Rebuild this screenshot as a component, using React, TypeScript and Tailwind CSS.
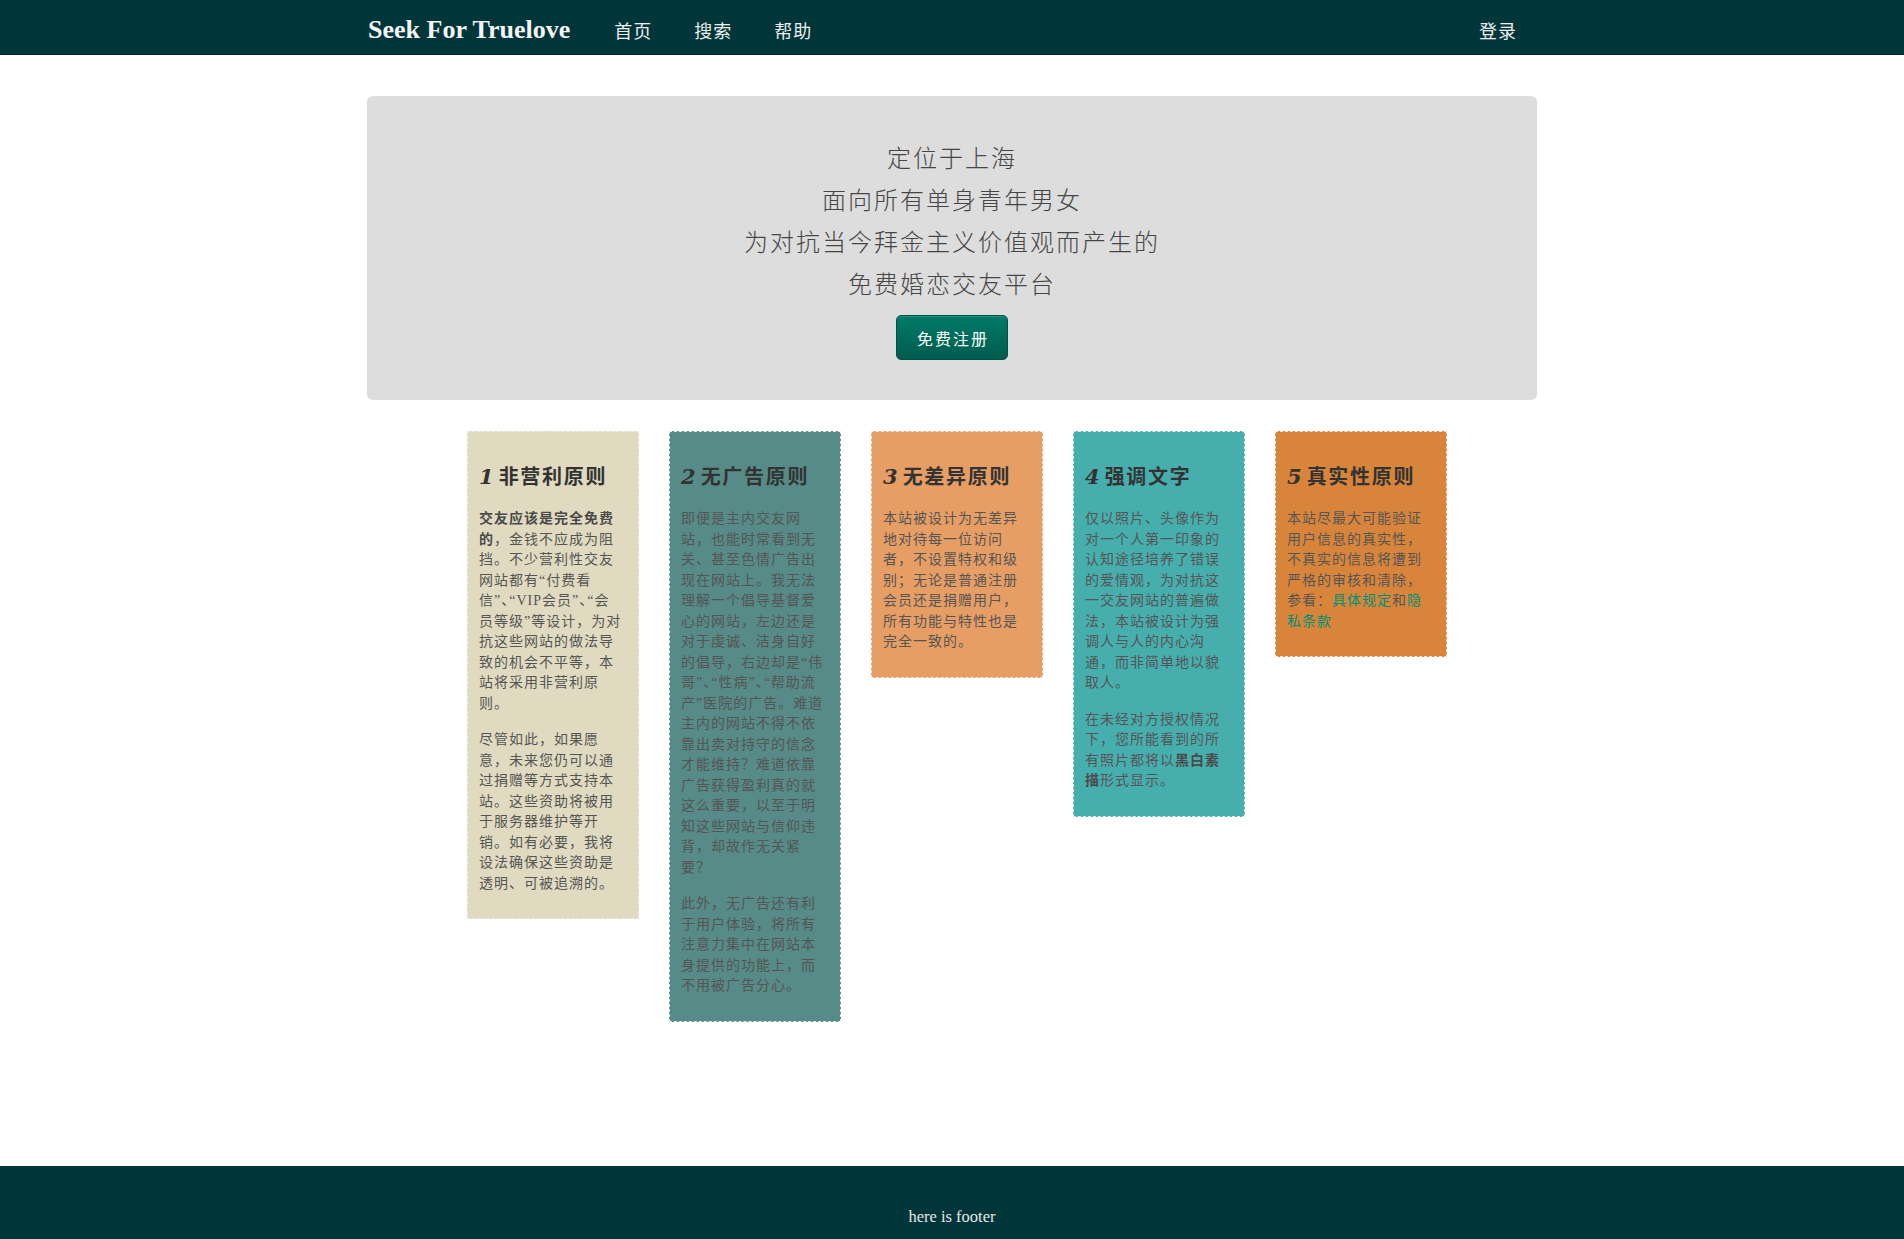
import React from "react";

type Line = React.ReactNode;

const B = ({ children }: { children: React.ReactNode }) => (
  <b className="font-bold text-[#4a4a4a]">{children}</b>
);
const H = ({ children }: { children: React.ReactNode }) => (
  <span className="[font-feature-settings:'halt']">{children}</span>
);
const L = ({ children }: { children: React.ReactNode }) => (
  <a href="#" className="text-[#008f78] no-underline">
    {children}
  </a>
);

type Card = { bg: string; num: string; title: string; paras: Line[][] };

const cards: Card[] = [
  {
    bg: "bg-[#e0dbc0]",
    num: "1",
    title: "非营利原则",
    paras: [
      [
        <B>交友应该是完全免费</B>,
        <>
          <B>的</B>，金钱不应成为阻
        </>,
        "挡。不少营利性交友",
        "网站都有“付费看",
        <>
          信”<H>、</H>“VIP会员”<H>、</H>“会
        </>,
        "员等级”等设计，为对",
        "抗这些网站的做法导",
        "致的机会不平等，本",
        "站将采用非营利原",
        "则。",
      ],
      [
        "尽管如此，如果愿",
        "意，未来您仍可以通",
        "过捐赠等方式支持本",
        "站。这些资助将被用",
        "于服务器维护等开",
        "销。如有必要，我将",
        "设法确保这些资助是",
        "透明、可被追溯的。",
      ],
    ],
  },
  {
    bg: "bg-[#568b87]",
    num: "2",
    title: "无广告原则",
    paras: [
      [
        "即便是主内交友网",
        "站，也能时常看到无",
        "关、甚至色情广告出",
        "现在网站上。我无法",
        "理解一个倡导基督爱",
        "心的网站，左边还是",
        "对于虔诚、洁身自好",
        "的倡导，右边却是“伟",
        <>
          哥”<H>、</H>“性病”<H>、</H>“帮助流
        </>,
        "产”医院的广告。难道",
        "主内的网站不得不依",
        "靠出卖对持守的信念",
        "才能维持？难道依靠",
        "广告获得盈利真的就",
        "这么重要，以至于明",
        "知这些网站与信仰违",
        "背，却故作无关紧",
        "要？",
      ],
      [
        "此外，无广告还有利",
        "于用户体验，将所有",
        "注意力集中在网站本",
        "身提供的功能上，而",
        "不用被广告分心。",
      ],
    ],
  },
  {
    bg: "bg-[#e79e64]",
    num: "3",
    title: "无差异原则",
    paras: [
      [
        "本站被设计为无差异",
        "地对待每一位访问",
        "者，不设置特权和级",
        "别；无论是普通注册",
        "会员还是捐赠用户，",
        "所有功能与特性也是",
        "完全一致的。",
      ],
    ],
  },
  {
    bg: "bg-[#47aeae]",
    num: "4",
    title: "强调文字",
    paras: [
      [
        "仅以照片、头像作为",
        "对一个人第一印象的",
        "认知途径培养了错误",
        "的爱情观，为对抗这",
        "一交友网站的普遍做",
        "法，本站被设计为强",
        "调人与人的内心沟",
        "通，而非简单地以貌",
        "取人。",
      ],
      [
        "在未经对方授权情况",
        "下，您所能看到的所",
        <>
          有照片都将以<B>黑白素</B>
        </>,
        <>
          <B>描</B>形式显示。
        </>,
      ],
    ],
  },
  {
    bg: "bg-[#d8853b]",
    num: "5",
    title: "真实性原则",
    paras: [
      [
        "本站尽最大可能验证",
        "用户信息的真实性，",
        "不真实的信息将遭到",
        "严格的审核和清除，",
        <>
          参看：<L>具体规定</L>和<L>隐</L>
        </>,
        <L>私条款</L>,
      ],
    ],
  },
];

export default function App() {
  return (
    <div className="min-h-screen flex flex-col bg-white font-['Liberation_Serif','Noto_Sans_CJK_SC',serif]">
      {/* Navbar */}
      <nav className="h-[55px] bg-[#00353a] border-b border-[#00272b] box-border">
        <div className="w-[1170px] mx-auto h-full flex items-center">
          <a
            href="#"
            className="ml-[1px] text-[26px] font-bold text-[#f4f4f4] leading-none font-['Liberation_Serif',serif] pt-[5px]"
          >
            Seek For Truelove
          </a>
          <div className="ml-[44px] flex gap-[42px] text-[18px] tracking-[1px] text-[#eeeeee] font-['Noto_Sans_CJK_SC',sans-serif] pt-[6px]">
            <a href="#">首页</a>
            <a href="#">搜索</a>
            <a href="#">帮助</a>
          </div>
          <a
            href="#"
            className="ml-auto mr-[20px] text-[18px] tracking-[1px] text-[#eeeeee] font-['Noto_Sans_CJK_SC',sans-serif] pt-[6px]"
          >
            登录
          </a>
        </div>
      </nav>

      {/* Main */}
      <main className="flex-1">
        <div className="w-[1170px] mx-auto">
          <section className="mt-[41px] bg-[#dddddd] rounded-[6px] pt-[40px] pb-[40px] flex flex-col items-center">
            <div className="text-center text-[24px] tracking-[2px] leading-[42px] text-[#454545] font-['Noto_Sans_CJK_SC',sans-serif] font-light">
              <div>定位于上海</div>
              <div>面向所有单身青年男女</div>
              <div>为对抗当今拜金主义价值观而产生的</div>
              <div>免费婚恋交友平台</div>
            </div>
            <button className="mt-[11px] w-[112px] h-[45px] rounded-[5px] bg-gradient-to-b from-[#007b68] to-[#005c4e] border border-[#005248] text-white text-[16px] tracking-[2px] pl-[2px] font-['Noto_Sans_CJK_SC',sans-serif] shadow-[inset_0_1px_0_rgba(255,255,255,0.15)]">
              免费注册
            </button>
          </section>

          <div className="mt-[31px] pl-[100px] flex items-start gap-[30px]">
            {cards.map((c) => (
              <div
                key={c.num}
                className={`${c.bg} w-[172px] border border-dashed border-[#eaeaea] px-[11px] pt-[30px] pb-[24px]`}
              >
                <h3 className="text-[20px] leading-[28px] font-bold text-[#333333] mb-[18px] tracking-[1.7px] whitespace-nowrap font-['Noto_Sans_CJK_SC',sans-serif]">
                  <span className="italic font-['DejaVu_Serif',serif] text-[21px] tracking-normal mr-[5px]">
                    {c.num}
                  </span>
                  {c.title}
                </h3>
                <div className="flex flex-col gap-[16px]">
                  {c.paras.map((p, i) => (
                    <p
                      key={i}
                      className="text-[14px] leading-[20.5px] tracking-[1px] text-[#555555]"
                    >
                      {p.map((ln, j) => (
                        <span key={j} className="block whitespace-nowrap">
                          {ln}
                        </span>
                      ))}
                    </p>
                  ))}
                </div>
              </div>
            ))}
          </div>
        </div>
      </main>

      {/* Footer */}
      <footer className="h-[73px] bg-[#00353a] pt-[39px] text-center">
        <span className="text-[16.5px] leading-[18px] text-[#e8e8e8] font-['Liberation_Serif',serif]">
          here is footer
        </span>
      </footer>
    </div>
  );
}
